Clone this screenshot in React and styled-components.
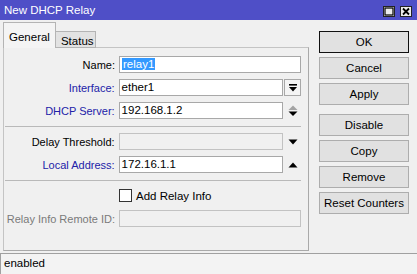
import React from 'react'
import styled, { createGlobalStyle } from 'styled-components'

const GlobalStyle = createGlobalStyle`
  html, body {
    margin: 0;
    padding: 0;
    background: #f0f0f0;
  }
  * {
    box-sizing: border-box;
  }
`

const font = `"Liberation Sans", Arial, sans-serif`

function DropIcon() {
  return (
    <svg width="8" height="8" viewBox="0 0 8 8">
      <rect x="0" y="0" width="8" height="1.6" fill="#000" />
      <polygon points="0,3 8,3 4,7.5" fill="#000" />
    </svg>
  )
}

function UpDownIcon() {
  return (
    <svg width="10" height="12" viewBox="0 0 10 12">
      <polygon points="0.5,5 9.5,5 5,0.5" fill="#a3a3a3" />
      <polygon points="0.5,6.5 9.5,6.5 5,11" fill="#000" />
    </svg>
  )
}

function ArrowIcon({ up }) {
  return (
    <svg width="10" height="6" viewBox="0 0 10 6">
      {up ? <polygon points="0.5,5.5 9.5,5.5 5,0.5" fill="#000" /> : <polygon points="0.5,0.5 9.5,0.5 5,5.5" fill="#000" />}
    </svg>
  )
}

export default function App() {
  return (
    <>
      <GlobalStyle />
      <Window>
        <TitleBar>
          <Title>New DHCP Relay</Title>
          <TitleButtons>
            <TitleButton>
              <svg width="10" height="9" viewBox="0 0 10 9">
                <rect x="1" y="1" width="8" height="7" fill="none" stroke="#000" strokeWidth="1.2" />
              </svg>
            </TitleButton>
            <TitleButton>
              <svg width="10" height="9" viewBox="0 0 10 9">
                <path d="M2 1.5 L8 7.5 M8 1.5 L2 7.5" stroke="#000" strokeWidth="1.8" />
              </svg>
            </TitleButton>
          </TitleButtons>
        </TitleBar>
        <Body>
          <Left>
            <Tabs>
              <Tab $active>General</Tab>
              <Tab>Status</Tab>
            </Tabs>
            <Panel>
              <Row>
                <Label>Name:</Label>
                <Field $wide>
                  <Selected>relay1</Selected>
                </Field>
              </Row>
              <Row>
                <Label $tone="link">Interface:</Label>
                <Field>ether1</Field>
                <SideButton>
                  <DropIcon />
                </SideButton>
              </Row>
              <Row>
                <Label $tone="link">DHCP Server:</Label>
                <Field>192.168.1.2</Field>
                <Side>
                  <UpDownIcon />
                </Side>
              </Row>
              <Separator />
              <Row>
                <Label>Delay Threshold:</Label>
                <Field $disabled />
                <Side>
                  <ArrowIcon />
                </Side>
              </Row>
              <Row>
                <Label $tone="link">Local Address:</Label>
                <Field>172.16.1.1</Field>
                <Side>
                  <ArrowIcon up />
                </Side>
              </Row>
              <Separator />
              <Row>
                <Label />
                <Checkbox />
                <CheckText>Add Relay Info</CheckText>
              </Row>
              <Row>
                <Label $tone="muted">Relay Info Remote ID:</Label>
                <Field $wide $disabled />
              </Row>
            </Panel>
          </Left>
          <Actions>
            <Button $primary>OK</Button>
            <Button>Cancel</Button>
            <Button>Apply</Button>
            <Button $gap>Disable</Button>
            <Button>Copy</Button>
            <Button>Remove</Button>
            <Button>Reset Counters</Button>
          </Actions>
        </Body>
        <StatusBar>enabled</StatusBar>
      </Window>
    </>
  )
}

const Window = styled.div`
  width: 417px;
  height: 274px;
  display: flex;
  flex-direction: column;
  background: #f0f0f0;
  font-family: ${font};
  font-size: 11px;
  color: #000;
  overflow: hidden;
`
const TitleBar = styled.div`
  height: 20px;
  flex: none;
  background: #4f4fc7;
  display: flex;
  align-items: center;
  justify-content: space-between;
  padding: 0 5px 0 4px;
`
const Title = styled.div`
  color: #fff;
  font-size: 11.5px;
`
const TitleButtons = styled.div`
  display: flex;
  gap: 5px;
  margin-top: 2px;
`
const TitleButton = styled.div`
  width: 12px;
  height: 11px;
  background: #ececec;
  border: 1px solid #222;
  display: flex;
  align-items: center;
  justify-content: center;
`
const Body = styled.div`
  flex: 1;
  display: flex;
  gap: 10px;
  padding: 3px 8px 2px 3px;
`
const Left = styled.div`
  width: 306px;
  display: flex;
  flex-direction: column;
`
const Tabs = styled.div`
  height: 25px;
  display: flex;
  align-items: flex-end;
  position: relative;
  z-index: 1;
  margin-bottom: -1px;
`
const Tab = styled.div`
  height: ${p => (p.$active ? '26px' : '17px')};
  padding: ${p => (p.$active ? '7px 5px 0' : '2px 1px 0 5px')};
  background: ${p => (p.$active ? '#f4f4f4' : '#e2e2e2')};
  border: 1px solid #b4b4b4;
  border-bottom: ${p => (p.$active ? 'none' : '1px solid #b4b4b4')};
  border-left: ${p => (p.$active ? '1px solid #b4b4b4' : 'none')};
  font-size: 11.5px;
  line-height: 14px;
  white-space: nowrap;
`
const Panel = styled.div`
  flex: 1;
  border: 1px solid #a9a9a9;
  border-top-color: #c4c4c4;
  border-left-color: #c4c4c4;
  background: #f0f0f0;
  padding: 8px 7px 0 0;
  display: flex;
  flex-direction: column;
  gap: 6px;
`
const Row = styled.div`
  height: 17px;
  display: flex;
  align-items: center;
`
const Label = styled.div`
  width: 111px;
  margin-right: 4px;
  text-align: right;
  white-space: nowrap;
  color: ${p => (p.$tone === 'link' ? '#2222a8' : p.$tone === 'muted' ? '#7a7a7a' : '#000')};
`
const Field = styled.div`
  width: ${p => (p.$wide ? '182px' : '165px')};
  height: 17px;
  border: 1px solid ${p => (p.$disabled ? '#c2c2c2' : '#a8a8a8')};
  background: ${p => (p.$disabled ? '#f0f0f0' : '#fff')};
  padding: 0 2px;
  font-size: 11.5px;
  line-height: 15px;
  white-space: nowrap;
`
const Selected = styled.span`
  background: #3399ff;
  color: #fff;
  padding: 0 1px;
`
const Side = styled.div`
  width: 17px;
  height: 17px;
  display: flex;
  align-items: center;
  justify-content: center;
  margin-left: 1px;
`
const SideButton = styled(Side)`
  border: 1px solid #a8a8a8;
  background: #f4f4f4;
`
const Separator = styled.div`
  height: 1px;
  margin-top: 1px;
  margin-left: 1px;
  background: #b9b9b9;
`
const Checkbox = styled.div`
  width: 13px;
  height: 13px;
  border: 1px solid #333;
  background: #fff;
`
const CheckText = styled.span`
  margin-left: 4px;
  font-size: 11.5px;
`
const Actions = styled.div`
  width: 91px;
  margin-top: 8px;
  display: flex;
  flex-direction: column;
  gap: 4px;
`
const Button = styled.div`
  height: 22px;
  margin-top: ${p => (p.$gap ? '5px' : '0')};
  display: flex;
  align-items: center;
  justify-content: center;
  background: #e1e1e1;
  border: 1px solid ${p => (p.$primary ? '#111' : '#adadad')};
  box-shadow: ${p => (p.$primary ? 'inset 0 0 0 1px #e1e1e1' : 'none')};
  font-size: 11.5px;
  white-space: nowrap;
`
const StatusBar = styled.div`
  height: 21px;
  flex: none;
  border-top: 1px solid #a0a0a0;
  border-left: 1px solid #a0a0a0;
  background: #f3f3f3;
  padding: 0 3px;
  font-size: 11.5px;
  line-height: 19px;
`
